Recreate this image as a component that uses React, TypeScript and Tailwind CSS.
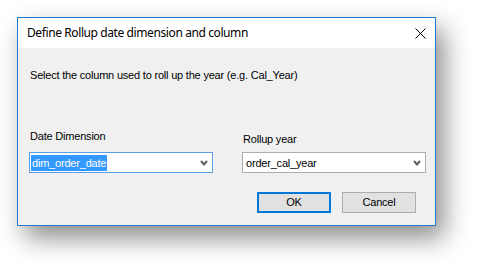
import React from "react";

function Chevron() {
  return (
    <svg width="8" height="6" viewBox="0 0 8 6" className="shrink-0">
      <polyline points="1,1 4,4.5 7,1" fill="none" stroke="#606060" strokeWidth="2" />
    </svg>
  );
}

function Combo({ value, selected, focused }: { value: string; selected?: boolean; focused?: boolean }) {
  return (
    <div
      className={
        "flex h-[21px] w-[184px] items-center justify-between bg-white pl-[1px] pr-[4px] border " +
        (focused ? "border-[#5a9ee6]" : "border-[#adadad]")
      }
    >
      {selected ? (
        <span className="bg-[#3399ff] px-[1px] text-white leading-[16px]">{value}</span>
      ) : (
        <span className="pl-[2px] text-black leading-[16px]">{value}</span>
      )}
      <Chevron />
    </div>
  );
}

export default function App() {
  return (
    <div className="h-[274px] w-[484px] overflow-hidden bg-white pl-[17px] pt-[17px]">
      <div
        className="flex h-[209px] w-[419px] flex-col border border-[#1c7bd0] bg-[#f0f0f0] shadow-[8px_12px_24px_rgba(0,0,0,0.45)]"
        style={{ fontFamily: '"Liberation Sans", Arial, sans-serif' }}
      >
        <div className="flex h-[30px] shrink-0 items-center justify-between bg-white pl-[9px] pr-[9px]">
          <span
            className="text-[12px] text-black tracking-[-0.4px]"
            style={{ fontFamily: '"Noto Sans", "Liberation Sans", sans-serif' }}
          >
            Define Rollup date dimension and column
          </span>
          <svg width="11" height="11" viewBox="0 0 11 11">
            <path d="M0.5 0.5 L10.5 10.5 M10.5 0.5 L0.5 10.5" stroke="#000" strokeWidth="1" />
          </svg>
        </div>
        <div className="flex flex-1 flex-col pl-[11px] pr-[9px] pt-[21px] text-[11px] leading-[13px] tracking-[-0.2px] text-black">
          <div className="pl-[1px]">Select the column used to roll up the year (e.g. Cal_Year)</div>
          <div className="mt-[48px] flex gap-[29px]">
            <div className="flex flex-col">
              <div className="pl-[1px]">Date Dimension</div>
              <div className="mt-[9px]">
                <Combo value="dim_order_date" selected focused />
              </div>
            </div>
            <div className="flex flex-col">
              <div className="mt-[3px] pl-[1px]">Rollup year</div>
              <div className="mt-[6px]">
                <Combo value="order_cal_year" />
              </div>
            </div>
          </div>
          <div className="mt-[19px] flex justify-end gap-[11px] pr-[10px]">
            <div className="flex h-[21px] w-[74px] items-center justify-center border-2 border-[#0078d7] bg-[#e1e1e1]">
              OK
            </div>
            <div className="flex h-[21px] w-[74px] items-center justify-center border border-[#adadad] bg-[#e1e1e1]">
              Cancel
            </div>
          </div>
        </div>
      </div>
    </div>
  );
}
